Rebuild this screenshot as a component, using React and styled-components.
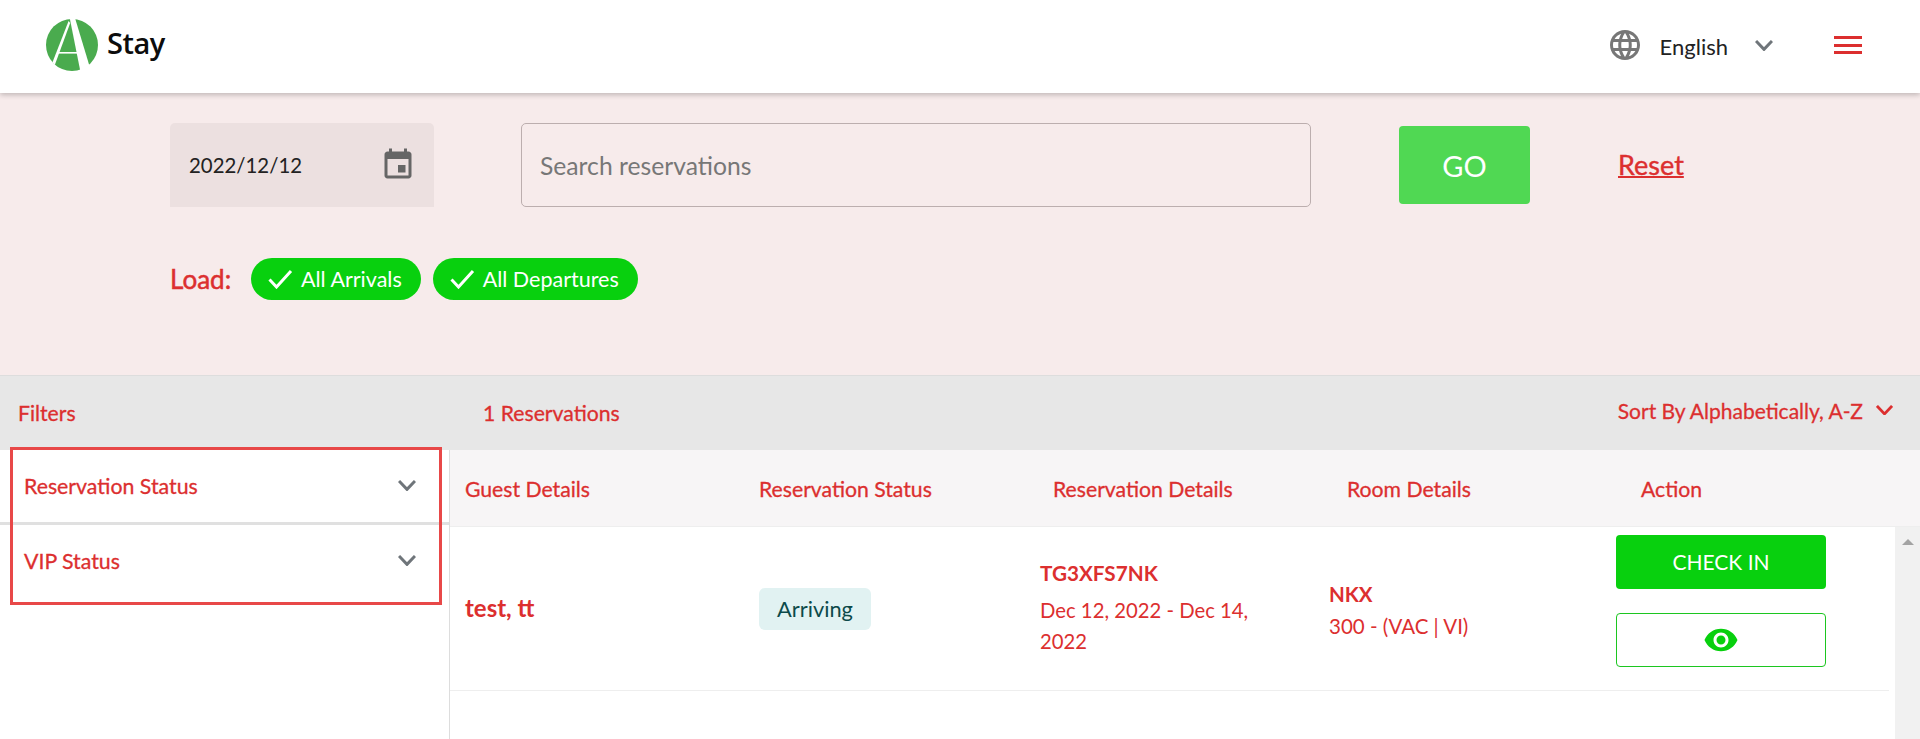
import React from 'react'
import styled, {createGlobalStyle} from 'styled-components'

const RED = '#dc2f2f';
const GREEN = '#08d00e';

const GlobalStyle = createGlobalStyle`
  html, body {
    margin: 0;
    height: 100%;
    background: #fff;
    overflow: hidden;
  }
  * {
    box-sizing: border-box;
  }
  body {
    font-family: Lato, "Liberation Sans", sans-serif;
  }
`;

const Page = styled.div`
  height: 739px;
  display: flex;
  flex-direction: column;
  overflow: hidden;
`;

const Header = styled.header`
  height: 93px;
  flex: none;
  display: flex;
  align-items: center;
  padding: 0 58px 3px 46px;
  background: #fff;
  box-shadow: 0 2px 5px rgba(0, 0, 0, 0.22);
  position: relative;
  z-index: 2;
`;

const Brand = styled.div`
  display: flex;
  align-items: center;
  gap: 9px;
  flex: 1;
`;

const BrandName = styled.span`
  font-family: "Open Sans", sans-serif;
  font-size: 29px;
  font-weight: 600;
  letter-spacing: -0.5px;
  color: #0c0c0c;
  padding-bottom: 6px;
`;

const LangIcon = styled.svg`
  width: 36px;
  height: 36px;
  fill: #777;
`;

const LangLabel = styled.span`
  margin-left: 17px;
  font-size: 22px;
  color: #222;
  padding-top: 3px;
`;

const Chevron = styled.svg`
  width: ${p => p.size || 18}px;
  height: ${p => (p.size || 18) * 0.6}px;
  fill: none;
  stroke: ${p => p.color || '#6f757a'};
  stroke-width: 3;
  flex: none;
`;

const LangChevron = styled(Chevron)`
  margin-left: 27px;
  margin-top: 1px;
`;

const Burger = styled.button`
  margin-left: 61px;
  width: 28px;
  height: 18px;
  padding: 0;
  border: 0;
  background: none;
  display: flex;
  flex-direction: column;
  justify-content: space-between;
  span {
    height: 3px;
    background: ${RED};
  }
`;

const SearchPanel = styled.section`
  height: 282px;
  flex: none;
  background: #f7ebeb;
  padding: 30px 170px 0;
`;

const SearchRow = styled.div`
  display: flex;
  align-items: center;
`;

const DateField = styled.div`
  width: 264px;
  height: 84px;
  display: flex;
  align-items: center;
  justify-content: space-between;
  padding: 0 18px 0 19px;
  background: #ece0e0;
  border-radius: 5px 5px 0 0;
  font-size: 20.4px;
  color: #222;
`;

const CalendarIcon = styled.svg`
  width: 36px;
  height: 36px;
  fill: #666;
`;

const SearchField = styled.div`
  width: 790px;
  height: 84px;
  margin-left: 87px;
  display: flex;
  align-items: center;
  padding-left: 18px;
  border: 1px solid #bcaeae;
  border-radius: 5px;
  font-size: 24.7px;
  color: #777;
`;

const GoButton = styled.button`
  width: 131px;
  height: 78px;
  margin-left: 88px;
  border: 0;
  border-radius: 4px;
  background: #50d853;
  color: #fff;
  font-family: inherit;
  font-size: 29px;
`;

const ResetLink = styled.a`
  margin-left: 88px;
  margin-top: -2px;
  font-size: 27px;
  color: ${RED};
  -webkit-text-stroke: 0.4px ${RED};
  text-decoration: underline;
  text-decoration-thickness: 2px;
`;

const LoadRow = styled.div`
  display: flex;
  align-items: center;
  margin-top: 51px;
`;

const LoadLabel = styled.span`
  font-size: 26px;
  color: ${RED};
  -webkit-text-stroke: 0.5px ${RED};
  margin-right: 18px;
  width: 63px;
  white-space: nowrap;
`;

const Chip = styled.div`
  height: 42px;
  display: flex;
  align-items: center;
  gap: 8px;
  margin-right: 12px;
  padding: 0 19px 0 17px;
  border-radius: 21px;
  background: ${GREEN};
  color: #fff;
  font-size: 21.5px;
`;

const CheckIcon = styled.svg`
  width: 25px;
  height: 20px;
  fill: none;
  stroke: #fff;
  stroke-width: 3;
`;

const ResultBar = styled.div`
  height: 75px;
  flex: none;
  display: flex;
  align-items: center;
  background: #e7e7e7;
  border-top: 1px solid #ddd;
  color: ${RED};
  font-size: 21.2px;
  -webkit-text-stroke: 0.3px ${RED};
`;

const BarTitle = styled.span`
  width: ${p => p.width}px;
  flex: none;
  padding-left: ${p => p.pad}px;
`;

const SortBy = styled.div`
  margin-left: auto;
  display: flex;
  align-items: center;
  gap: 13px;
  padding-right: 27px;
  margin-top: -6px;
  font-size: 21px;
`;

const Main = styled.div`
  flex: 1;
  display: flex;
  min-height: 0;
  position: relative;
`;

const Sidebar = styled.aside`
  width: 450px;
  flex: none;
  border-right: 1px solid #ddd;
`;

const FilterRow = styled.div`
  height: 75px;
  display: flex;
  align-items: center;
  justify-content: space-between;
  padding: 0 33px ${p => p.lift}px 24px;
  color: ${RED};
  font-size: 21.3px;
  -webkit-text-stroke: 0.3px ${RED};
  border-bottom: ${p => (p.divided ? '3px solid #e0e0e0' : '0')};
`;

// annotation box drawn over the filters in the source screenshot
const Highlight = styled.div`
  position: absolute;
  left: 10px;
  top: -3px;
  width: 432px;
  height: 158px;
  border: 3px solid #e84848;
  pointer-events: none;
`;

const TablePane = styled.div`
  flex: 1;
  display: flex;
  flex-direction: column;
  min-width: 0;
`;

const TableHead = styled.div`
  height: 77px;
  flex: none;
  display: grid;
  grid-template-columns: repeat(5, 294px);
  align-items: center;
  background: #f7f5f6;
  border-bottom: 1px solid #eee;
  color: ${RED};
  font-size: 21.2px;
  -webkit-text-stroke: 0.3px ${RED};
  padding-top: 1px;
`;

const HeadCell = styled.div`
  padding-left: 15px;
`;

const TableBody = styled.div`
  flex: 1;
  display: flex;
  min-height: 0;
`;

const Rows = styled.div`
  flex: 1;
  padding-right: 6px;
`;

const Row = styled.div`
  height: 164px;
  display: grid;
  grid-template-columns: 294px 281px 289px 287px 210px;
  align-items: center;
  padding-left: 15px;
  border-bottom: 1px solid #eee;
  color: ${RED};
`;

const GuestName = styled.div`
  font-size: 24px;
  font-weight: 700;
  margin-top: -3px;
`;

const StatusBadge = styled.span`
  justify-self: start;
  width: 112px;
  height: 42px;
  display: flex;
  align-items: center;
  justify-content: center;
  border-radius: 6px;
  background: #e1f2f2;
  color: #0c4a4a;
  font-size: 21.8px;
`;

const Details = styled.div`
  width: 240px;
  font-size: 20.3px;
  line-height: 31px;
  margin-top: -2px;
`;

const Code = styled.div`
  font-size: 20.7px;
  font-weight: 700;
  margin-bottom: 6px;
`;

const Room = styled.div`
  font-size: 20.5px;
  line-height: 32px;
  margin-top: 3px;
`;

const RoomName = styled.div`
  font-weight: 700;
`;

const Actions = styled.div`
  display: flex;
  flex-direction: column;
  gap: 24px;
  margin-top: -16px;
`;

const CheckInButton = styled.button`
  height: 54px;
  border: 0;
  border-radius: 4px;
  background: ${GREEN};
  color: #fff;
  font-family: inherit;
  font-size: 21px;
`;

const ViewButton = styled.button`
  height: 54px;
  display: flex;
  align-items: center;
  justify-content: center;
  border: 1px solid #1cc620;
  border-radius: 4px;
  background: #fff;
  padding: 0;
`;

const EyeIcon = styled.svg`
  width: 36px;
  height: 36px;
  fill: ${GREEN};
`;

const Scrollbar = styled.div`
  width: 25px;
  flex: none;
  background: #f1f1f1;
  display: flex;
  justify-content: center;
  padding-top: 12px;
  &::before {
    content: '';
    width: 0;
    height: 0;
    border-left: 6px solid transparent;
    border-right: 6px solid transparent;
    border-bottom: 6px solid #a3a3a3;
  }
`;

const Logo = () => (
    <svg width="52" height="52" viewBox="0 0 52 52">
        <circle cx="26" cy="26" r="26" fill="#4aab4e"/>
        <polygon points="23.7,-1 29,-1 43.5,47 34.5,53" fill="#fff"/>
        <polygon points="22.6,2 24.2,4 8.8,46 6.4,43.5" fill="#fff"/>
        <rect x="12" y="33" width="24" height="1.6" fill="#fff"/>
    </svg>
);

const DownChevron = ({size, color}) => (
    <Chevron size={size} color={color} viewBox="0 0 18 10.8">
        <polyline points="1,1 9,9.4 17,1"/>
    </Chevron>
);

const App = () => (
    <Page>
        <GlobalStyle/>
        <Header>
            <Brand>
                <Logo/>
                <BrandName>Stay</BrandName>
            </Brand>
            <LangIcon viewBox="0 0 24 24">
                <path d="M11.99 2C6.47 2 2 6.48 2 12s4.47 10 9.99 10C17.52 22 22 17.52 22 12S17.52 2 11.99 2zm6.93 6h-2.95c-.32-1.25-.78-2.45-1.38-3.56 1.84.63 3.37 1.91 4.33 3.56zM12 4.04c.83 1.2 1.48 2.53 1.91 3.96h-3.82c.43-1.43 1.08-2.76 1.91-3.96zM4.26 14C4.1 13.36 4 12.69 4 12s.1-1.36.26-2h3.38c-.08.66-.14 1.32-.14 2 0 .68.06 1.34.14 2H4.26zm.82 2h2.95c.32 1.25.78 2.45 1.38 3.56-1.84-.63-3.37-1.9-4.33-3.56zm2.95-8H5.08c.96-1.66 2.49-2.93 4.33-3.56C8.81 5.55 8.35 6.75 8.03 8zM12 19.96c-.83-1.2-1.48-2.53-1.91-3.96h3.82c-.43 1.43-1.08 2.76-1.91 3.96zM14.34 14H9.66c-.09-.66-.16-1.32-.16-2 0-.68.07-1.35.16-2h4.68c.09.65.16 1.32.16 2 0 .68-.07 1.34-.16 2zm.25 5.56c.6-1.11 1.06-2.31 1.38-3.56h2.95c-.96 1.65-2.49 2.93-4.33 3.56zM16.36 14c.08-.66.14-1.32.14-2 0-.68-.06-1.34-.14-2h3.38c.16.64.26 1.31.26 2s-.1 1.36-.26 2h-3.38z"/>
            </LangIcon>
            <LangLabel>English</LangLabel>
            <LangChevron viewBox="0 0 18 10.8">
                <polyline points="1,1 9,9.4 17,1"/>
            </LangChevron>
            <Burger aria-label="menu"><span/><span/><span/></Burger>
        </Header>

        <SearchPanel>
            <SearchRow>
                <DateField>
                    2022/12/12
                    <CalendarIcon viewBox="0 0 24 24">
                        <path d="M17 12h-5v5h5v-5zM16 1v2H8V1H6v2H5c-1.11 0-1.99.9-1.99 2L3 19c0 1.1.89 2 2 2h14c1.1 0 2-.9 2-2V5c0-1.1-.9-2-2-2h-1V1h-2zm3 18H5V8h14v11z"/>
                    </CalendarIcon>
                </DateField>
                <SearchField>Search reservations</SearchField>
                <GoButton>GO</GoButton>
                <ResetLink>Reset</ResetLink>
            </SearchRow>
            <LoadRow>
                <LoadLabel>Load:</LoadLabel>
                {['All Arrivals', 'All Departures'].map(label =>
                    <Chip key={label}>
                        <CheckIcon viewBox="0 0 25 20"><polyline points="1.5,10.5 8.5,18 23,2"/></CheckIcon>
                        {label}
                    </Chip>
                )}
            </LoadRow>
        </SearchPanel>

        <ResultBar>
            <BarTitle width={464} pad={18}>Filters</BarTitle>
            <BarTitle width={300} pad={19}>1 Reservations</BarTitle>
            <SortBy>
                Sort By Alphabetically, A-Z
                <DownChevron size={17} color={RED}/>
            </SortBy>
        </ResultBar>

        <Main>
            <Sidebar>
                <FilterRow lift={1} divided>
                    Reservation Status
                    <DownChevron/>
                </FilterRow>
                <FilterRow lift={4}>
                    VIP Status
                    <DownChevron/>
                </FilterRow>
            </Sidebar>
            <Highlight/>
            <TablePane>
                <TableHead>
                    {['Guest Details', 'Reservation Status', 'Reservation Details', 'Room Details', 'Action'].map(title =>
                        <HeadCell key={title}>{title}</HeadCell>
                    )}
                </TableHead>
                <TableBody>
                    <Rows>
                        <Row>
                            <GuestName>test, tt</GuestName>
                            <StatusBadge>Arriving</StatusBadge>
                            <Details>
                                <Code>TG3XFS7NK</Code>
                                Dec 12, 2022 - Dec 14, 2022
                            </Details>
                            <Room>
                                <RoomName>NKX</RoomName>
                                300 - (VAC | VI)
                            </Room>
                            <Actions>
                                <CheckInButton>CHECK IN</CheckInButton>
                                <ViewButton>
                                    <EyeIcon viewBox="0 0 24 24">
                                        <path d="M12 4.5C7 4.5 2.73 7.61 1 12c1.73 4.39 6 7.5 11 7.5s9.27-3.11 11-7.5c-1.73-4.39-6-7.5-11-7.5zM12 17c-2.76 0-5-2.24-5-5s2.24-5 5-5 5 2.24 5 5-2.24 5-5 5zm0-8c-1.66 0-3 1.34-3 3s1.34 3 3 3 3-1.34 3-3-1.34-3-3-3z"/>
                                    </EyeIcon>
                                </ViewButton>
                            </Actions>
                        </Row>
                    </Rows>
                    <Scrollbar/>
                </TableBody>
            </TablePane>
        </Main>
    </Page>
);

export default App;
